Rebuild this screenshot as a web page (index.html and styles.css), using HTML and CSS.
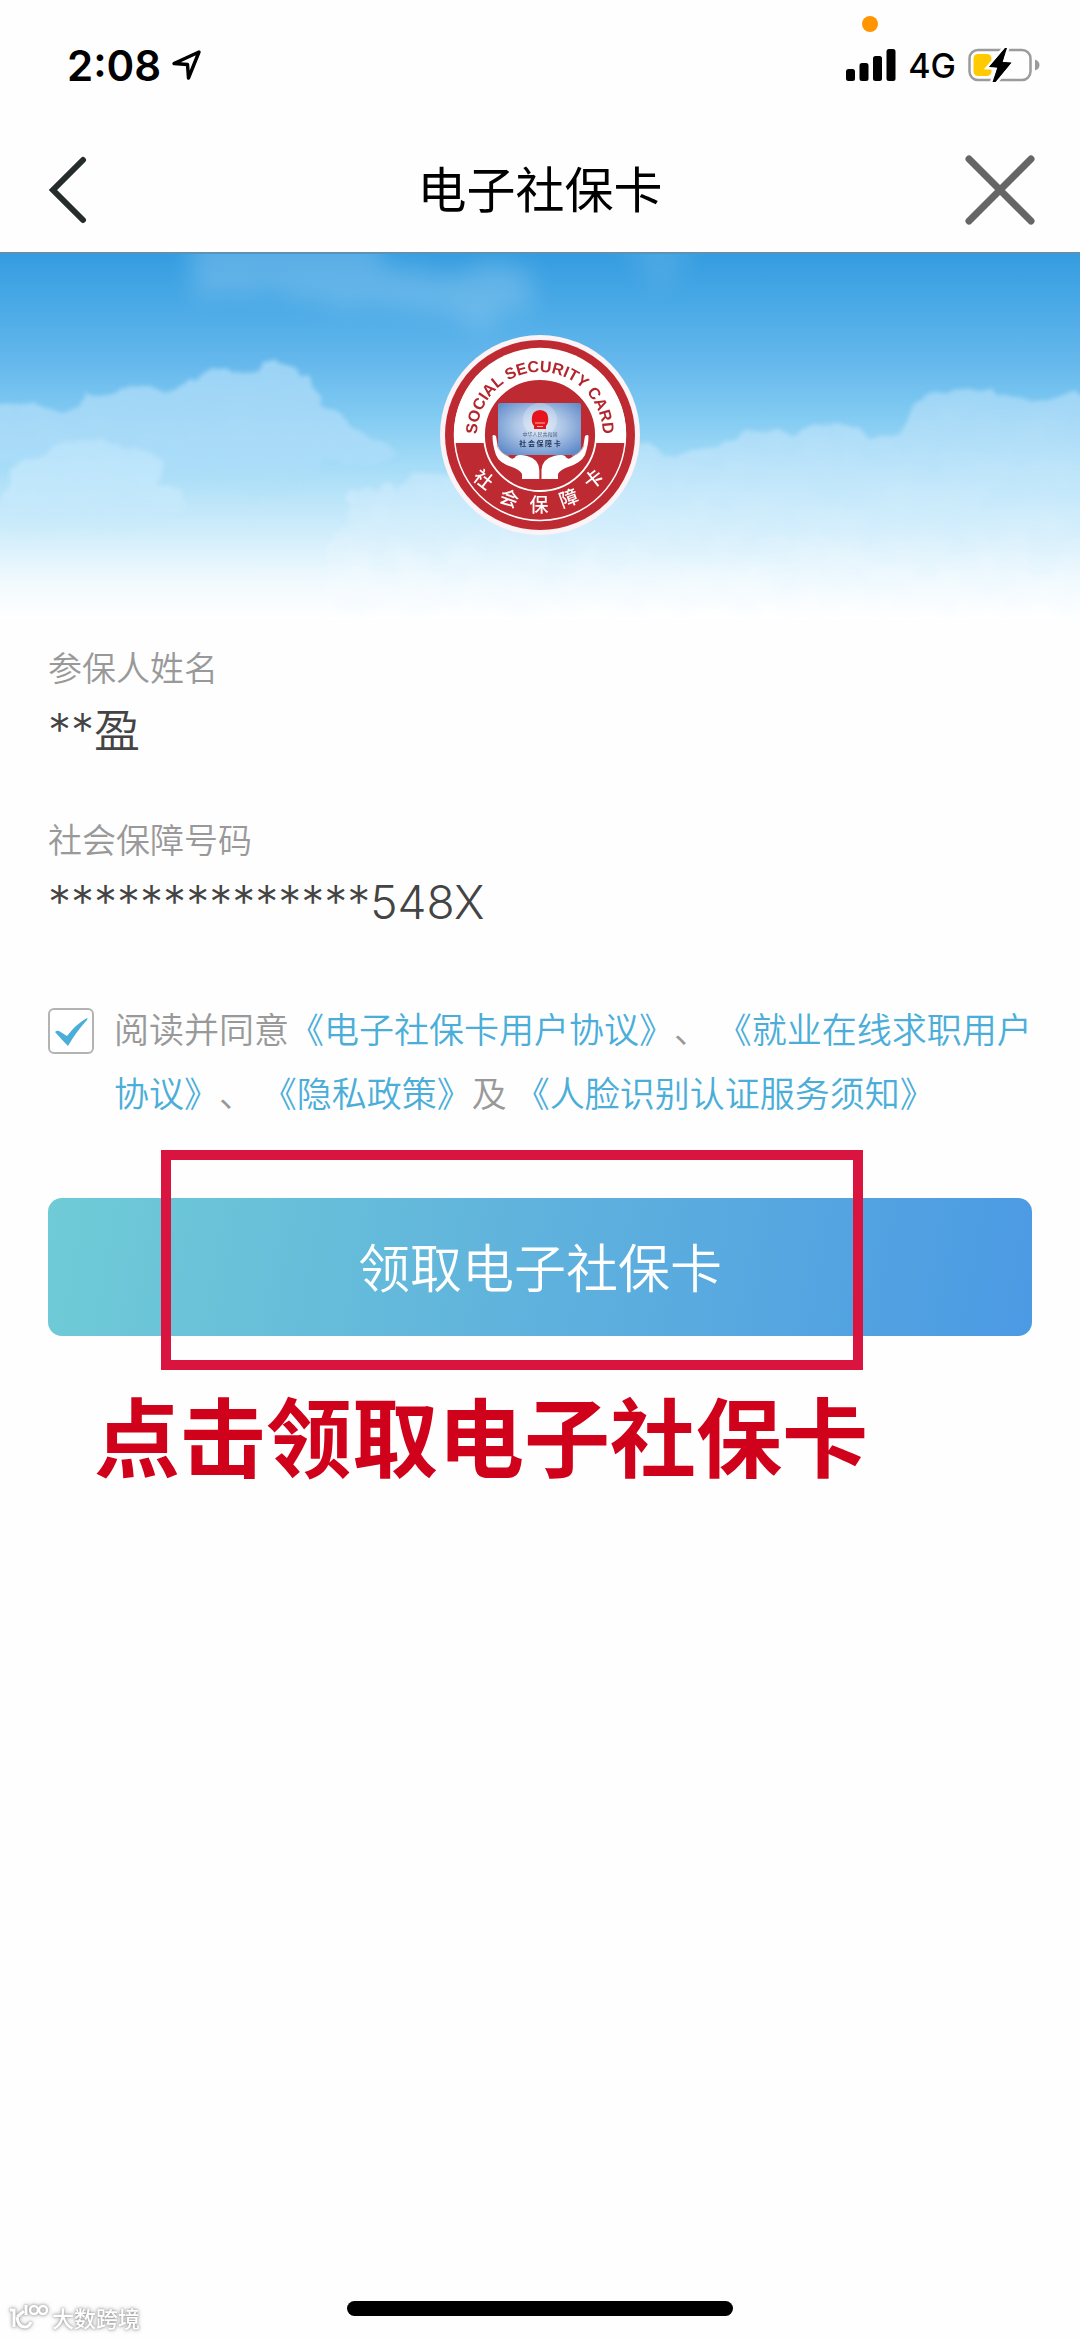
FILE: index.html
```html
<!DOCTYPE html>
<html lang="zh-CN">

<head>
    <meta charset="UTF-8">
    <meta name="viewport" content="width=device-width, initial-scale=1.0">
    <title>电子社保卡</title>
    <link rel="stylesheet" href="styles.css">
</head>

<body>
    <!-- Status bar -->
    <div class="status-bar">
        <div class="status-left">
            <span class="time">2:08</span>
            <svg class="location-icon" viewBox="0 0 32 32" width="32" height="32">
                <path d="M28 3 L3 14.5 L16.5 15.5 L17.5 29 Z" fill="none" stroke="#000" stroke-width="3.4" stroke-linejoin="round" />
            </svg>
        </div>
        <div class="status-right">
            <span class="mic-dot"></span>
            <svg viewBox="0 0 50 32" width="50" height="32">
                <rect x="0" y="20" width="9" height="12" rx="2.5" />
                <rect x="13.5" y="14" width="9" height="18" rx="2.5" />
                <rect x="27" y="7" width="9" height="25" rx="2.5" />
                <rect x="40.5" y="0" width="9" height="32" rx="2.5" />
            </svg>
            <span class="network">4G</span>
            <svg viewBox="0 0 72 34" width="72" height="34">
                <rect x="1.5" y="2" width="61" height="30" rx="8.5" fill="none" stroke="#9b9b9b" stroke-width="2.5" />
                <path d="M67 11.5 Q71.5 13 71.5 17 Q71.5 21 67 22.5 Z" fill="#9b9b9b" />
                <rect x="5.5" y="6" width="18" height="22" rx="4.5" fill="#ffcb00" />
                <path d="M37 0 L21 19 L29.5 19.5 L24.5 34 L27.5 34 L43.5 14.5 L34.5 14 L39 0 Z" fill="#000" stroke="#fff" stroke-width="5" paint-order="stroke" />
                <path d="M37 0.5 L21.5 18.5 L29.5 19.5 L25.5 33.5 L27.5 33.5 L43 15 L34.5 14 L38 0.5 Z" fill="#000" />
            </svg>
        </div>
    </div>

    <!-- Title bar -->
    <header class="nav">
        <button class="nav-btn" type="button" aria-label="返回">
            <svg viewBox="0 0 40 68" width="40" height="68">
                <path d="M34 4 L4 34 L34 64" fill="none" stroke="#262b2b" stroke-width="6" stroke-linecap="round" />
            </svg>
        </button>
        <h1 class="nav-title">电子社保卡</h1>
        <button class="nav-btn nav-close" type="button" aria-label="关闭">
            <svg viewBox="0 0 70 70" width="70" height="70">
                <path d="M4 4 L66 66 M66 4 L4 66" fill="none" stroke="#666" stroke-width="7" stroke-linecap="round" />
            </svg>
        </button>
    </header>

    <!-- Sky banner with emblem -->
    <section class="hero">
        <svg class="sky" viewBox="0 0 1080 368" preserveAspectRatio="none" aria-hidden="true">
            <defs>
                <linearGradient id="skyFill" x1="0" y1="0" x2="0" y2="1">
                    <stop offset="0" stop-color="#349ce0" />
                    <stop offset="0.14" stop-color="#49a9e6" />
                    <stop offset="0.3" stop-color="#65b8ec" />
                    <stop offset="0.44" stop-color="#80caf2" />
                    <stop offset="0.58" stop-color="#a5dcf7" />
                    <stop offset="0.76" stop-color="#d0edfb" />
                    <stop offset="0.9" stop-color="#f2fafe" />
                    <stop offset="1" stop-color="#fff" />
                </linearGradient>
                <linearGradient id="cloudLeft" gradientUnits="userSpaceOnUse" x1="0" y1="110" x2="0" y2="270">
                    <stop offset="0" stop-color="#9bd3f5" />
                    <stop offset="0.5" stop-color="#a9dbf8" />
                    <stop offset="1" stop-color="#b8e3fa" stop-opacity="0" />
                </linearGradient>
                <linearGradient id="cloudLow" gradientUnits="userSpaceOnUse" x1="0" y1="185" x2="0" y2="285">
                    <stop offset="0" stop-color="#b6e2fa" />
                    <stop offset="0.6" stop-color="#c4e8fb" />
                    <stop offset="1" stop-color="#cdecfc" stop-opacity="0" />
                </linearGradient>
                <linearGradient id="cloudRight" gradientUnits="userSpaceOnUse" x1="0" y1="130" x2="0" y2="368">
                    <stop offset="0" stop-color="#9ad3f5" />
                    <stop offset="0.3" stop-color="#b6e1f9" />
                    <stop offset="0.6" stop-color="#d3eefc" />
                    <stop offset="0.85" stop-color="#f2fafe" />
                    <stop offset="1" stop-color="#fff" />
                </linearGradient>
                <filter id="fluff" x="-5%" y="-10%" width="110%" height="120%">
                    <feTurbulence type="fractalNoise" baseFrequency="0.035" numOctaves="5" seed="11" />
                    <feDisplacementMap in="SourceGraphic" scale="20" xChannelSelector="R" yChannelSelector="G" />
                    <feGaussianBlur stdDeviation="2" />
                </filter>
                <filter id="haze" x="-20%" y="-40%" width="140%" height="180%">
                    <feTurbulence type="fractalNoise" baseFrequency="0.03" numOctaves="4" seed="3" />
                    <feDisplacementMap in="SourceGraphic" scale="40" xChannelSelector="R" yChannelSelector="G" />
                    <feGaussianBlur stdDeviation="12" />
                </filter>
            </defs>
            <rect width="1080" height="368" fill="url(#skyFill)" />
            <g filter="url(#haze)" fill="#fff">
                <path opacity="0.18" d="M190 -30 L385 -30 L390 20 L530 20 L525 50 L490 60 L480 75 L440 60 L400 50 L340 55 L280 45 L190 50 Z" />
                <path opacity="0.1" d="M610 -30 L700 -30 L685 15 L665 35 L650 42 L638 20 Z" />
            </g>
            <g filter="url(#fluff)">
                <path fill="url(#cloudLeft)" d="M-20 158 L20 151 L50 158 L80 155 L86 140 L110 142 L128 134 L150 132 L165 137 L200 131 L210 117 L235 120 L260 117 L275 110 L295 116 L312 128 L325 150 L342 160 L352 178 L385 188 L398 205 L372 216 L340 213 L320 205 L312 230 L272 238 L256 252 L245 235 L205 222 L190 240 L150 250 L60 250 L-20 190 Z" />
                <path fill="url(#cloudLow)" d="M5 235 L15 215 L42 205 L60 190 L100 186 L140 195 L162 215 L160 232 L180 240 L194 254 L175 268 L100 285 L-20 285 Z" />
            </g>
            <path filter="url(#fluff)" fill="url(#cloudRight)" d="M320 400 L325 310 L332 285 L345 262 L355 240 L385 230 L402 240 L410 222 L425 218 L455 225 L520 240 L628 185 L650 192 L672 201 L700 201 L722 194 L735 186 L745 175 L770 178 L795 182 L815 174 L835 170 L855 178 L872 187 L888 182 L905 165 L915 150 L922 138 L948 140 L968 134 L985 140 L1005 144 L1030 146 L1060 146 L1110 142 L1110 400 Z" />
            <path d="M0 1 H1080" stroke="#5c93b5" stroke-width="2" />
        </svg>

        <svg class="emblem" viewBox="0 0 200 200" role="img" aria-label="社会保障卡">
            <defs>
                <path id="arcTop" d="M37 108 L37 100 A63 63 0 0 1 163 100 L163 108" />
                <radialGradient id="cardFill" cx="0.5" cy="0.45" r="0.65">
                    <stop offset="0" stop-color="#dce7f4" />
                    <stop offset="0.45" stop-color="#adc5e6" />
                    <stop offset="1" stop-color="#5f8bc9" />
                </radialGradient>
            </defs>
            <circle cx="100" cy="100" r="100" fill="#fbf3f5" />
            <circle cx="100" cy="100" r="95" fill="#be2a31" />
            <path d="M14.5 108 A86 86 0 1 1 185.5 108 Z" fill="#fff" />
            <circle cx="100" cy="100" r="85.5" fill="none" stroke="#fff" stroke-width="1.5" />
            <circle cx="100" cy="100" r="56" fill="#be2a31" stroke="#fff" stroke-width="1.8" />
            <text class="emblem-en"><textPath href="#arcTop" startOffset="50%">SOCIAL SECURITY CARD</textPath></text>
            <g class="emblem-cn">
                <text transform="translate(43 145) rotate(38)" y="6">社</text>
                <text transform="translate(69 164) rotate(20)" y="6">会</text>
                <text transform="translate(99 171)" y="6">保</text>
                <text transform="translate(129 164) rotate(-20)" y="6">障</text>
                <text transform="translate(154 145) rotate(-38)" y="6">卡</text>
            </g>
            <rect x="58" y="68" width="83" height="52" rx="2" fill="url(#cardFill)" />
            <circle cx="100" cy="85" r="17" fill="#fff" opacity="0.25" />
            <path d="M92 82 Q92 76 100 75 Q108 76 108 82 Q109 88 106 91 L106 94 L94 94 L94 91 Q91 88 92 82 Z" fill="#e6141c" />
            <path d="M95 88 H105 M97 91.5 H103" stroke="#f6b8a8" stroke-width="1.2" />
            <text class="card-small" x="100" y="101">中华人民共和国</text>
            <text class="card-name" x="100" y="111">社 会 保 障 卡</text>
            <g fill="#fff">
                <path d="M52.5 101 Q53 99 56 101 L57.5 110 Q59 115 64 119 L69 122 Q73 126 76 121 Q79 119 87 121 Q99 124 99.3 135 L99.3 144 L82 144 L82 139 Q80 135 72 132 Q59 128 56 120 Q52.5 110 52.5 101 Z" />
                <path d="M148.5 101 Q148 99 145 101 L143.5 110 Q142 115 137 119 L132 122 Q128 126 125 121 Q122 119 114 121 Q102 124 101.5 135 L101.5 144 L118 144 L118 139 Q120 135 128 132 Q141 128 145 120 Q148.5 110 148.5 101 Z" />
            </g>
            <path d="M57 110 Q59 118 69 121 M144 110 Q142 118 132 121" fill="none" stroke="#d98a90" stroke-width="0.8" />
        </svg>
    </section>

    <main class="content">
        <dl class="info">
            <dt>参保人姓名</dt>
            <dd>**盈</dd>
            <dt>社会保障号码</dt>
            <dd>**************548X</dd>
        </dl>

        <div class="agreement">
            <input type="checkbox" class="agree-box" id="agree" checked>
            <p class="agree-text"><label for="agree">阅读并同意</label><a href="#">《电子社保卡用户协议》</a>、 <a href="#">《就业在线求职用户协议》</a>、 <a href="#">《隐私政策》</a>及 <a href="#">《人脸识别认证服务须知》</a></p>
        </div>

        <div class="action">
            <button class="submit-btn" type="button">领取电子社保卡</button>
            <div class="highlight"></div>
        </div>

        <p class="hint">点击领取电子社保卡</p>
    </main>

    <footer class="footer">
        <div class="watermark">
            <svg viewBox="0 0 42 30" width="42" height="30" fill="none" stroke="#fff" stroke-width="3">
                <path d="M2 8 H6 V25 M16 9 L9 15" />
                <path d="M9 15 Q10 25 17 25 Q21 25 23 20" />
                <path d="M18 3 V13" />
                <circle cx="26" cy="8" r="4" stroke-width="2.5" />
                <circle cx="35" cy="8" r="4" stroke-width="2.5" />
            </svg>
            <span>大数跨境</span>
        </div>
        <div class="home-indicator"></div>
    </footer>
</body>

</html>
```

FILE: styles.css
```css
* {
    margin: 0;
    padding: 0;
    box-sizing: border-box;
}

body {
    display: flex;
    flex-direction: column;
    min-height: 100vh;
    background-color: #fefefe;
    color: #000;
    font-family: 'Noto Sans CJK SC', sans-serif;
}

button {
    border: none;
    background: none;
    font-family: inherit;
    cursor: pointer;
}

svg {
    display: block;
}

/* Status bar */
.status-bar {
    display: flex;
    align-items: center;
    justify-content: space-between;
    height: 128px;
    padding: 2px 40px 0 67px;
    font-family: 'Inter', sans-serif;
}

.status-left {
    display: flex;
    align-items: center;
    gap: 10px;
}

.time {
    font-size: 42px;
    font-weight: 600;
}

.status-right {
    position: relative;
    display: flex;
    align-items: center;
    gap: 12px;
}

.network {
    font-size: 34px;
    font-weight: 500;
}

.mic-dot {
    position: absolute;
    top: -29px;
    left: 16px;
    width: 16px;
    height: 16px;
    border-radius: 50%;
    background-color: #ff9500;
}

/* Title bar */
.nav {
    display: grid;
    grid-template-columns: 1fr auto 1fr;
    align-items: center;
    height: 124px;
    padding: 0 45px;
}

.nav-btn {
    justify-self: start;
    padding-left: 4px;
}

.nav-close {
    justify-self: end;
}

.nav-title {
    padding-bottom: 6px;
    font-size: 49px;
    font-weight: 400;
    line-height: 60px;
}

/* Banner */
.hero {
    display: grid;
    height: 368px;
    overflow: hidden;
}

.sky,
.emblem {
    grid-area: 1 / 1;
}

.sky {
    width: 100%;
    height: 368px;
}

.emblem {
    width: 200px;
    height: 200px;
    margin-top: 83px;
    justify-self: center;
}

.emblem-en {
    font-family: 'Liberation Sans', sans-serif;
    font-size: 16px;
    font-weight: 700;
    fill: #b3262d;
    text-anchor: middle;
}

.emblem-cn {
    font-size: 19px;
    font-weight: 500;
    fill: #fff;
    text-anchor: middle;
}

.card-small {
    font-size: 5px;
    fill: #4b5f85;
    text-anchor: middle;
}

.card-name {
    font-size: 7px;
    font-weight: 700;
    fill: #26375c;
    text-anchor: middle;
}

/* Form content */
.content {
    flex: 1;
    padding: 24px 48px 0;
}

.info dt {
    color: #999;
    font-size: 34px;
    font-weight: 350;
    line-height: 46px;
}

.info dd {
    margin-bottom: 48px;
    padding-top: 2px;
    color: #444;
    font-family: 'Inter', 'Noto Sans CJK SC', sans-serif;
    font-size: 46px;
    font-weight: 350;
    line-height: 76px;
}

.agreement {
    display: flex;
    align-items: flex-start;
    gap: 20px;
    margin-top: 56px;
}

.agree-box {
    flex: none;
    width: 46px;
    height: 46px;
    margin-top: 12px;
    border: 2px solid #b3b3b3;
    border-radius: 6px;
    background: #fff url("data:image/svg+xml,%3Csvg xmlns='http://www.w3.org/2000/svg' viewBox='0 0 42 42'%3E%3Cpath d='M5 22 Q7 20 9 21 L17 26 Q26 14 37 8 Q38 8 37 10 Q26 22 18 36 Q12 30 5 22 Z' fill='%234baed9'/%3E%3C/svg%3E") center / contain no-repeat;
    appearance: none;
}

.agree-text {
    flex: 1;
    color: #999;
    font-size: 35px;
    font-weight: 350;
    line-height: 64px;
    text-spacing-trim: space-all;
}

.agree-text a {
    color: #4baed9;
    text-decoration: none;
}

.action {
    position: relative;
    margin-top: 74px;
}

.submit-btn {
    display: block;
    width: 100%;
    height: 138px;
    padding-bottom: 4px;
    border-radius: 14px;
    background: linear-gradient(100deg, #6fcbd6, #5fb2dd 50%, #4b9ae4);
    color: #fff;
    font-size: 52px;
    font-weight: 350;
}

/* Red frame drawn over the button */
.highlight {
    position: absolute;
    top: -48px;
    right: 169px;
    bottom: -34px;
    left: 113px;
    border: 10px solid #d9153f;
    pointer-events: none;
}

.hint {
    margin: 48px 0 0 46px;
    color: #d0021b;
    font-size: 86px;
    font-weight: 700;
    line-height: 100px;
}

/* Bottom area */
.footer {
    position: relative;
    padding: 20px 0 22px;
}

.home-indicator {
    width: 386px;
    height: 15px;
    margin: 0 auto;
    border-radius: 8px;
    background-color: #000;
}

.watermark {
    position: absolute;
    bottom: 6px;
    left: 8px;
    display: flex;
    align-items: center;
    gap: 2px;
    color: #fff;
    font-size: 22px;
    font-weight: 500;
    line-height: 30px;
    filter: drop-shadow(0 0 1px #999) drop-shadow(0 0 2px #bbb);
}
```
